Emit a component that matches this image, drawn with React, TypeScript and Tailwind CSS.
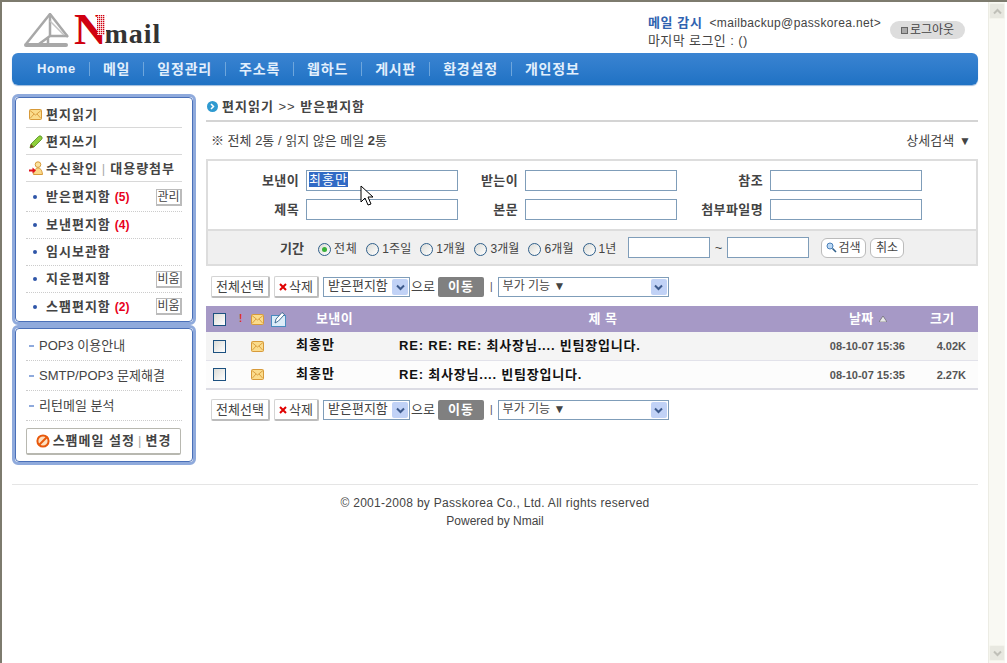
import type { ReactNode } from 'react';

function Envelope({ w = 13, h = 11 }: { w?: number; h?: number }) {
  return (
    <svg width={w} height={h} viewBox="0 0 13 11" className="shrink-0">
      <rect x="0.5" y="0.5" width="12" height="10" rx="1" fill="#fbdc8c" stroke="#d79a3a" />
      <path d="M1 1.5 6.5 6 12 1.5M1 9.5 5 5M12 9.5 8 5" fill="none" stroke="#d79a3a" strokeWidth="0.9" />
    </svg>
  );
}

function Pencil() {
  return (
    <svg width="14" height="14" viewBox="0 0 14 14" className="shrink-0">
      <path d="M1 13 2 9 9.5 1.5a1.5 1.5 0 0 1 3 3L5 12Z" fill="#8fcf3a" stroke="#4d8a1c" strokeWidth="0.8" />
      <path d="M1 13 2 9 5 12Z" fill="#7a4a1c" />
    </svg>
  );
}

function ReceiptIcon() {
  return (
    <svg width="14" height="15" viewBox="0 0 14 15" className="shrink-0">
      <circle cx="9" cy="3.6" r="2.8" fill="#fbe3a0" stroke="#d79a3a" />
      <path d="M4.5 13.5C5 8.5 7 7 9 7s4 1.5 4.5 6.5Z" fill="#fbd98a" stroke="#d79a3a" />
      <path d="M0 8.5h3.5V6.5L7 9.5l-3.5 3v-2H0Z" fill="#e0121b" />
    </svg>
  );
}

function SpamIcon() {
  return (
    <svg width="14" height="14" viewBox="0 0 14 14" className="shrink-0">
      <circle cx="7" cy="7" r="5.6" fill="#fde0c0" stroke="#e8590c" strokeWidth="2" />
      <path d="M3 11 11 3" stroke="#e8590c" strokeWidth="2" />
    </svg>
  );
}

function PenBox() {
  return (
    <svg width="16" height="16" viewBox="0 0 16 16" className="shrink-0">
      <rect x="0.5" y="4.5" width="14" height="11" fill="#dcecf8" stroke="#4a8cc0" />
      <path d="M4 12 5 8 11 1.5l2.5 2L7.5 10Z" fill="#fff" stroke="#2f5f8a" strokeWidth="0.9" />
    </svg>
  );
}

function Checkbox() {
  return <div className="w-[13px] h-[13px] shrink-0 border border-[#1c5180] bg-gradient-to-br from-[#dcdcd7] to-[#ffffff]" />;
}

function Radio({ label, checked }: { label: string; checked?: boolean }) {
  return (
    <div className="flex items-center h-[20px]">
      <div className="w-[13px] h-[13px] rounded-full border border-[#2f5f8a] bg-gradient-to-br from-[#dcdcd7] to-[#ffffff] flex items-center justify-center">
        {checked && <div className="w-[5px] h-[5px] rounded-full bg-[#38b038]" />}
      </div>
      <span className={`ml-[3px] text-[12px] ${checked ? 'tracking-[0.6px]' : 'tracking-[0.1px]'}`}>{label}</span>
    </div>
  );
}

function GrayButton({ children, className }: { children: ReactNode; className: string }) {
  return (
    <div className={`h-[22px] flex items-center justify-center bg-white border border-[#d4d4d4] border-r-2 border-b-2 border-r-[#bcbcbc] border-b-[#bcbcbc] rounded-[2px] ${className}`}>
      {children}
    </div>
  );
}

function FakeSelect({ label, className }: { label: string; className: string }) {
  return (
    <div className={`h-[20px] flex items-center justify-between border border-[#7f9db9] bg-white pl-[4px] pr-[1px] ${className}`}>
      <span className="whitespace-nowrap -mt-[2px]">{label}</span>
      <div className="w-[16px] h-[16px] rounded-[2px] bg-[#c1d2f6] flex items-center justify-center">
        <svg width="9" height="7" viewBox="0 0 9 7">
          <path d="M1 1.5 4.5 5 8 1.5" fill="none" stroke="#3d5a8c" strokeWidth="2" />
        </svg>
      </div>
    </div>
  );
}

function Toolbar() {
  return (
    <div className="flex items-center h-[22px] pl-[5px]">
      <GrayButton className="w-[59px]">전체선택</GrayButton>
      <GrayButton className="w-[45px] ml-[4px] gap-[2px]">
        <svg width="8" height="8" viewBox="0 0 8 8"><path d="M1 1 7 7M7 1 1 7" stroke="#e00000" strokeWidth="2" /></svg>
        삭제
      </GrayButton>
      <FakeSelect label="받은편지함" className="w-[87px] ml-[4px]" />
      <span className="ml-[1px] w-[27px]">으로</span>
      <div className="w-[46px] h-[20px] bg-[#808080] text-white font-bold rounded-[2px] flex items-center justify-center tracking-[1px]">이동</div>
      <span className="mx-[6px] text-[10px]">|</span>
      <FakeSelect label="부가 기능 ▼" className="w-[171px] ml-[-1px] text-[12px]" />
    </div>
  );
}

function MailRow({ bg, subject, date, size, border }: { bg: string; subject: string; date: string; size: string; border: string }) {
  return (
    <div className={`flex items-center h-[29px] ${bg} ${border}`}>
      <div className="w-[45px] pl-[7px]"><Checkbox /></div>
      <div className="w-[45px]"><Envelope /></div>
      <div className="w-[103px] font-bold text-[#111111] tracking-[1px] -mt-[2px]">최홍만</div>
      <div className="w-[400px] font-bold text-[#111111] tracking-[0.8px]">{subject}</div>
      <div className="w-[106px] text-right text-[11px] font-bold text-[#555555]">{date}</div>
      <div className="w-[61px] text-right text-[11px] font-bold text-[#555555]">{size}</div>
    </div>
  );
}

function SideLink({ label, count, action, first }: { label: string; count?: number; action?: string; first?: boolean }) {
  return (
    <div className={`flex items-center border-b border-dotted border-[#cccccc] last:border-b-0 pl-[7px] ${first ? 'h-[30px] pt-[1px]' : 'h-[27px]'}`}>
      <div className="w-[4px] h-[4px] rounded-full bg-[#2f55a8]" />
      <span className="ml-[9px] font-bold tracking-[1px]">{label}</span>
      {count !== undefined && <span className="ml-[4px] text-[#e8001c] font-bold text-[12px]">({count})</span>}
      {action && (
        <div className="ml-auto w-[26px] h-[17px] flex items-center justify-center border border-[#bbbbbb] border-r-2 border-b-2 text-[12px] whitespace-nowrap">
          {action}
        </div>
      )}
    </div>
  );
}

function Panel({ children, className }: { children: ReactNode; className: string }) {
  return (
    <div className={`border-[3px] border-[#8faadc] rounded-[6px] ${className}`}>
      <div className="h-full border border-[#4a70b8] rounded-[4px] bg-white px-[10px]">{children}</div>
    </div>
  );
}

function Sidebar() {
  return (
    <div className="w-[184px] shrink-0">
      <Panel className="h-[231px]">
        <div className="flex items-center h-[27px] mt-[3px] border-b border-[#d8d8d8] pl-[3px] pt-[1px] gap-[4px] font-bold tracking-[1px]">
          <Envelope />
          <span>편지읽기</span>
        </div>
        <div className="flex items-center h-[27px] border-b border-[#d8d8d8] pl-[3px] pt-[1px] gap-[3px] font-bold tracking-[1px]">
          <Pencil />
          <span>편지쓰기</span>
        </div>
        <div className="flex items-center h-[27px] border-b border-[#d8d8d8] pl-[3px] pt-[1px] gap-[3px] font-bold tracking-[1px]">
          <ReceiptIcon />
          <span>수신확인</span>
          <span className="text-[#aaaaaa] font-normal mx-[1px]">|</span>
          <span>대용량첨부</span>
        </div>
        <SideLink label="받은편지함" count={5} action="관리" first />
        <SideLink label="보낸편지함" count={4} />
        <SideLink label="임시보관함" />
        <SideLink label="지운편지함" action="비움" />
        <SideLink label="스팸편지함" count={2} action="비움" />
      </Panel>
      <Panel className="h-[140px]">
        {['POP3 이용안내', 'SMTP/POP3 문제해결', '리턴메일 분석'].map((t) => (
          <div key={t} className="flex items-center h-[30px] border-b border-dotted border-[#cccccc] pl-[3px] first:mt-[2px]">
            <div className="w-[5px] h-[2px] bg-[#8faadc] mr-[5px]" />
            <span>{t}</span>
          </div>
        ))}
        <div className="mt-[7px] h-[27px] w-[155px] flex items-center justify-center gap-[3px] border border-[#b8b8b0] border-b-2 rounded-[2px] font-bold tracking-[1px]">
          <SpamIcon />
          <span>스팸메일 설정</span>
          <span className="font-normal text-[#aaaaaa]">|</span>
          <span>변경</span>
        </div>
      </Panel>
    </div>
  );
}

function Field({ label, labelWidth, value }: { label: string; labelWidth: string; value?: string }) {
  return (
    <>
      <div className={`${labelWidth} text-right font-bold tracking-[0.4px] pr-[7px]`}>{label}</div>
      {value ? (
        <div className="w-[152px] h-[21px] border border-[#7f9db9] bg-white pl-[2px] pt-[1px] flex items-start">
          <span className="bg-[#316ac5] text-white leading-[15px] tracking-[1px]">{value}</span>
        </div>
      ) : (
        <input className="w-[152px] h-[21px] border border-[#7f9db9] bg-white" />
      )}
    </>
  );
}

function SearchBox() {
  return (
    <div className="border-2 border-[#dddddd] h-[107px] flex flex-col">
      <div className="h-[70px] border-b-2 border-[#dddddd] pt-[9px]">
        <div className="flex items-center">
          <Field label="보낸이" labelWidth="w-[98px]" value="최홍만" />
          <Field label="받는이" labelWidth="w-[67px]" />
          <Field label="참조" labelWidth="w-[93px]" />
        </div>
        <div className="flex items-center mt-[8px]">
          <Field label="제목" labelWidth="w-[98px]" />
          <Field label="본문" labelWidth="w-[67px]" />
          <Field label="첨부파일명" labelWidth="w-[93px]" />
        </div>
      </div>
      <div className="flex-1 bg-[#f0f0f0] flex items-center pl-[72px]">
        <span className="font-bold w-[38px] mt-[3px]">기간</span>
        <div className="flex items-center gap-[9px] w-[310px] mt-[3px]">
          <Radio label="전체" checked />
          <Radio label="1주일" />
          <Radio label="1개월" />
          <Radio label="3개월" />
          <Radio label="6개월" />
          <Radio label="1년" />
        </div>
        <input className="w-[82px] h-[21px] border border-[#7f9db9] bg-white" />
        <span className="w-[17px] text-center">~</span>
        <input className="w-[82px] h-[21px] border border-[#7f9db9] bg-white" />
        <div className="ml-[12px] w-[45px] h-[20px] bg-white border border-[#bbbbbb] rounded-[6px] flex items-center justify-center gap-[1px] text-[12px]">
          <svg width="11" height="11" viewBox="0 0 11 11">
            <circle cx="4" cy="4" r="3" fill="#bcd8f4" stroke="#4a80b8" />
            <path d="M6.5 6.5 10 10" stroke="#2f5f8a" strokeWidth="1.6" />
          </svg>
          검색
        </div>
        <div className="ml-[4px] w-[34px] h-[20px] bg-white border border-[#bbbbbb] rounded-[6px] flex items-center justify-center text-[12px]">취소</div>
      </div>
    </div>
  );
}

function MailTable() {
  return (
    <div className="mt-[8px]">
      <div className="flex items-center h-[26px] bg-[#a699c6] text-white font-bold">
        <div className="w-[33px] pl-[7px]"><Checkbox /></div>
        <div className="w-[12px] text-[#e0301c] text-[10px] leading-none">!</div>
        <div className="w-[20px]"><Envelope /></div>
        <div className="w-[45px]"><PenBox /></div>
        <div className="w-[100px] tracking-[0.4px]">보낸이</div>
        <div className="w-[374px] text-center tracking-[0.5px] whitespace-pre">{'제 목'}</div>
        <div className="w-[140px] pl-[59px] flex items-center gap-[5px] tracking-[0.4px]">
          날짜
          <svg width="8" height="6" viewBox="0 0 8 6"><path d="M4 0 8 6H0Z" fill="#e8e8e8" stroke="#444444" strokeWidth="0.5" /></svg>
        </div>
        <div className="tracking-[0.4px]">크기</div>
      </div>
      <MailRow bg="bg-[#f4f4f4]" border="border-b border-[#e2e2ea]" subject="RE: RE: RE: 최사장님.... 빈팀장입니다." date="08-10-07 15:36" size="4.02K" />
      <MailRow bg="bg-[#fcfcfc]" border="border-b-2 border-[#dcdce4]" subject="RE: 최사장님.... 빈팀장입니다." date="08-10-07 15:35" size="2.27K" />
    </div>
  );
}

function Scrollbar() {
  return (
    <div className="w-[17px] shrink-0 bg-[#f9f9f3] flex flex-col justify-between border-l border-[#ecece4] pt-[1px] pb-[2px]">
      <div className="h-[16px] bg-[#e8e8e0] border border-[#f4f4ec] rounded-[2px] flex items-center justify-center">
        <svg width="9" height="7" viewBox="0 0 9 7"><path d="M1 5.5 4.5 2 8 5.5" fill="none" stroke="#c0c0b8" strokeWidth="2" /></svg>
      </div>
      <div className="h-[16px] bg-[#e8e8e0] border border-[#f4f4ec] rounded-[2px] flex items-center justify-center">
        <svg width="9" height="7" viewBox="0 0 9 7"><path d="M1 1.5 4.5 5 8 1.5" fill="none" stroke="#c0c0b8" strokeWidth="2" /></svg>
      </div>
    </div>
  );
}

function Logo() {
  const dots: [number, number][] = [];
  for (let y = 0; y < 10; y++) for (let x = 0; x < 4; x++) dots.push([x * 2, y * 2]);
  return (
    <div className="flex items-end pl-[12px] pb-[5px]">
      <svg width="50" height="35" viewBox="0 0 50 35">
        <path d="M2 31 26 1 44 24" fill="none" stroke="#a8a8a8" strokeWidth="2.5" />
        <path d="M26 1V23H44M26 23 15 31M24 24V31" fill="none" stroke="#a8a8a8" strokeWidth="2.5" />
        <path d="M26 8 40 22" fill="none" stroke="#c4c4c4" strokeWidth="1.5" />
        <rect x="0" y="30" width="44" height="4" rx="2" fill="#a8a8a8" />
      </svg>
      <span className="relative font-['Liberation_Serif',serif] font-bold text-[45px] leading-[38px] text-[#d00010]">
        N
        <svg width="9" height="20" viewBox="0 0 9 20" className="absolute right-[1px] top-[5px] bg-white">
          {dots.map(([x, y]) => <rect key={`${x}-${y}`} x={x} y={y} width="1.3" height="1.3" fill="#d00010" />)}
        </svg>
      </span>
      <span className="font-['Liberation_Serif',serif] font-bold text-[28px] leading-[28px] tracking-[1px] text-[#333333] -ml-[2px]">mail</span>
    </div>
  );
}

export default function App() {
  return (
    <div className="relative w-[1007px] h-[663px] overflow-hidden bg-white border-t-2 border-l-2 border-[#7d7b6e] flex pr-[2px] font-['Liberation_Sans','Noto_Sans_CJK_KR',sans-serif] text-[13px] leading-[16px] text-[#444444]">
      <div className="flex-1 min-w-0 px-[10px]">
        {/* top header */}
        <div className="h-[51px] flex justify-between">
          <Logo />
          <div className="flex pt-[12px]">
            <div className="leading-[17px] w-[242px]">
              <div className="whitespace-nowrap">
                <span className="font-bold text-[#2f62b0] tracking-[0.6px]">메일 감시</span>
                <span className="ml-[7px] text-[12px] tracking-[0.36px]">&lt;mailbackup@passkorea.net&gt;</span>
              </div>
              <div className="tracking-[0.4px]">마지막 로그인 : ()</div>
            </div>
            <div className="w-[75px] h-[18px] mt-[7px] mr-[13px] rounded-full bg-[#dddddd] flex items-center justify-center gap-[2px] text-[12px]">
              <span className="w-[7px] h-[7px] border border-[#666666] bg-[#aaaaaa]" />
              로그아웃
            </div>
          </div>
        </div>

        {/* main menu */}
        <div className="h-[32px] rounded-[6px] bg-gradient-to-b from-[#3a84d2] to-[#1f72c4] shadow-[0_1px_1px_#9ab8dc] flex items-center pl-[12px] text-[14px] font-bold text-[#e2effc] tracking-[0.8px]">
          {['Home', '메일', '일정관리', '주소록', '웹하드', '게시판', '환경설정', '개인정보'].map((m, i) => (
            <div key={m} className={`px-[13px] h-[14px] flex items-center ${i === 0 ? 'text-[13px] tracking-[0.7px]' : ''} ${i < 7 ? 'border-r border-[#6ea6dc]' : ''}`}>{m}</div>
          ))}
        </div>

        <div className="flex gap-[10px] mt-[9px]">
          <Sidebar />
          <div className="flex-1 min-w-0">
            <div className="h-[28px] flex items-center gap-[4px] border-b-2 border-[#d4d4d4] font-bold tracking-[1px] pb-[1px]">
              <svg width="11" height="11" viewBox="0 0 11 11" className="shrink-0 ml-[1px]">
                <circle cx="5.5" cy="5.5" r="5.5" fill="#2f9ad0" />
                <path d="M4 3 6.5 5.5 4 8" fill="none" stroke="#ffffff" strokeWidth="1.5" />
              </svg>
              <span>편지읽기 <span className="font-normal">&gt;&gt;</span> 받은편지함</span>
            </div>
            <div className="h-[37px] flex items-center justify-between pl-[5px] pr-[7px]">
              <div>※ 전체 2통 / 읽지 않은 메일 <b>2</b>통</div>
              <div className="flex items-center gap-[5px]">상세검색 <span className="text-[12px]">▼</span></div>
            </div>
            <SearchBox />
            <div className="mt-[10px]"><Toolbar /></div>
            <MailTable />
            <div className="mt-[9px]"><Toolbar /></div>
          </div>
        </div>

        {/* footer */}
        <div className="mt-[19px] border-t border-[#e5e5e5] pt-[9px] text-center text-[12px] leading-[18px]">
          <div className="tracking-[0.3px]">© 2001-2008 by Passkorea Co., Ltd. All rights reserved</div>
          <div>Powered by Nmail</div>
        </div>
      </div>
      <Scrollbar />

      {/* mouse pointer over the sender field */}
      <svg width="14" height="22" viewBox="0 0 14 22" className="absolute left-[358px] top-[183px]">
        <path d="M1 1v16l4-4 3 7 3-1-3-7h5Z" fill="#ffffff" stroke="#000000" />
      </svg>
    </div>
  );
}
